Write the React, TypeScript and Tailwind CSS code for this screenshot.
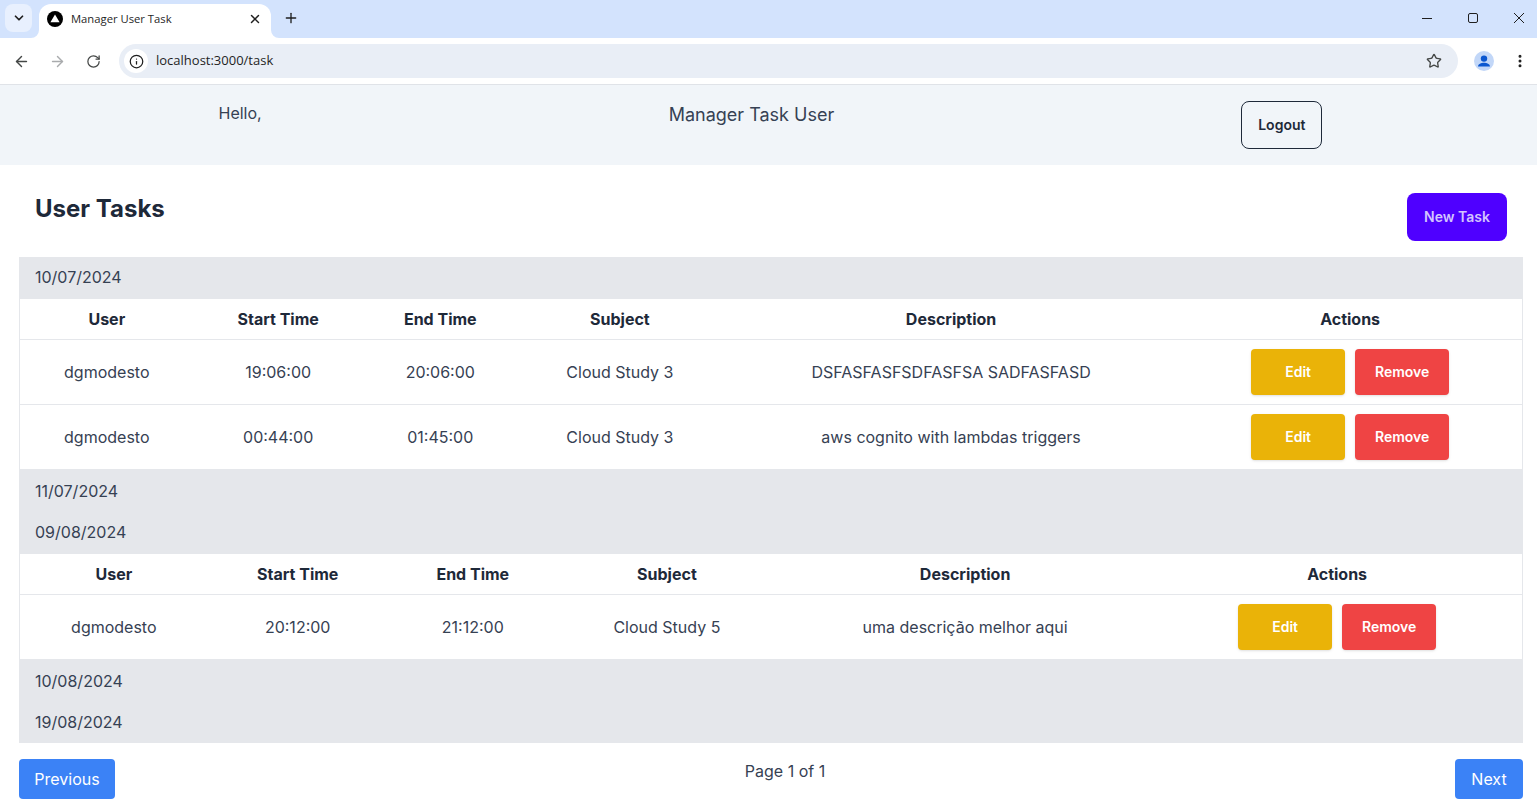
import { ArrowLeft, ArrowRight, ChevronDown, EllipsisVertical, Info, Plus, RotateCw, Star, X } from "lucide-react";

type Task = {
	user: string;
	start: string;
	end: string;
	subject: string;
	description: string;
};

type Group = {
	date: string;
	rowClass: string;
	widths: string[];
	tasks: Task[];
};

const firstWidths = ["w-[174px]", "w-[169px]", "w-[155px]", "w-[204px]", "w-[458px]", "w-[342px]"];
const thirdWidths = ["w-[188px]", "w-[180px]", "w-[170px]", "w-[218px]", "w-[378px]", "w-[368px]"];

const groups: Group[] = [
	{
		date: "10/07/2024",
		rowClass: "h-[42px] pt-2",
		widths: firstWidths,
		tasks: [
			{
				user: "dgmodesto",
				start: "19:06:00",
				end: "20:06:00",
				subject: "Cloud Study 3",
				description: "DSFASFASFSDFASFSA SADFASFASD",
			},
			{
				user: "dgmodesto",
				start: "00:44:00",
				end: "01:45:00",
				subject: "Cloud Study 3",
				description: "aws cognito with lambdas triggers",
			},
		],
	},
	{ date: "11/07/2024", rowClass: "h-[42px] pt-[9px]", widths: [], tasks: [] },
	{
		date: "09/08/2024",
		rowClass: "h-[42.5px] pt-2",
		widths: thirdWidths,
		tasks: [
			{
				user: "dgmodesto",
				start: "20:12:00",
				end: "21:12:00",
				subject: "Cloud Study 5",
				description: "uma descrição melhor aqui",
			},
		],
	},
	{ date: "10/08/2024", rowClass: "h-[42.5px] pt-[9px]", widths: [], tasks: [] },
	{ date: "19/08/2024", rowClass: "h-[41px] pt-2", widths: [], tasks: [] },
];

const headers = ["User", "Start Time", "End Time", "Subject", "Description", "Actions"];

function BrowserChrome() {
	return (
		<div className="font-['Open_Sans',sans-serif]">
			<div className="flex h-[38px] items-end bg-[#d3e3fd] text-[#1f1f1f]">
				<div className="mb-[6px] ml-[5px] flex h-[28px] w-[27px] items-center justify-center rounded-lg bg-[#e8f0fe]">
					<ChevronDown size={14} strokeWidth={3} />
				</div>
				<div className="relative ml-[7px] flex h-[34px] w-[232px] items-center rounded-t-xl bg-white pb-[5px] pl-[8px] pr-[9px]">
					<svg className="absolute -left-2 bottom-0" width="8" height="8" viewBox="0 0 8 8">
						<path d="M8 0v8H0a8 8 0 0 0 8-8z" fill="#fff" />
					</svg>
					<svg className="absolute -right-2 bottom-0" width="8" height="8" viewBox="0 0 8 8">
						<path d="M0 0v8h8a8 8 0 0 1-8-8z" fill="#fff" />
					</svg>
					<svg width="16" height="16" viewBox="0 0 16 16" className="shrink-0">
						<circle cx="8" cy="8" r="8" fill="#000" />
						<path d="M8 3.6 12.6 11.2H3.4z" fill="#fff" />
					</svg>
					<span className="ml-[8px] text-[11.25px] leading-none whitespace-nowrap">Manager User Task</span>
					<X size={14} strokeWidth={2.5} className="ml-auto" />
				</div>
				<Plus size={16} strokeWidth={2} className="mb-[12px] ml-3" />
				<div className="mb-[14px] ml-auto mr-3 flex items-center gap-[34px]">
					<svg width="12" height="12" viewBox="0 0 12 12" fill="none" stroke="#1f1f1f" strokeWidth="1">
						<path d="M1 6.5h10" />
					</svg>
					<svg width="12" height="12" viewBox="0 0 12 12" fill="none" stroke="#1f1f1f" strokeWidth="1">
						<rect x="1.5" y="1.5" width="9" height="9" rx="1.5" />
					</svg>
					<svg width="12" height="12" viewBox="0 0 12 12" fill="none" stroke="#1f1f1f" strokeWidth="1">
						<path d="M1 1l10 10M11 1 1 11" />
					</svg>
				</div>
			</div>
			<div className="flex h-[47px] items-center border-b border-[#e0e3e8] bg-white text-[#444746]">
				<ArrowLeft size={17} strokeWidth={2} className="ml-[13px]" />
				<ArrowRight size={17} strokeWidth={2} className="ml-[19px] text-[#a9abad]" />
				<RotateCw size={15} strokeWidth={2} className="ml-[20px]" />
				<div className="ml-[18px] flex h-[34px] flex-1 items-center rounded-full bg-[#e9eef6] pl-[5px] pr-[16px]">
					<div className="flex h-6 w-6 items-center justify-center rounded-full bg-white">
						<Info size={15} strokeWidth={2} className="text-[#1f1f1f]" />
					</div>
					<span className="ml-[8px] text-[13px] text-[#1f1f1f]">localhost:3000/task</span>
					<Star size={16} strokeWidth={2} className="ml-auto" />
				</div>
				<div className="ml-4 flex h-5 w-5 items-center justify-center overflow-hidden rounded-full bg-[#c2d7f8]">
					<svg width="20" height="20" viewBox="0 0 20 20">
						<circle cx="10" cy="7.6" r="3.2" fill="#0b57d0" />
						<path d="M4 15.6c0-2.6 3.4-3.8 6-3.8s6 1.2 6 3.8z" fill="#0b57d0" />
					</svg>
				</div>
				<EllipsisVertical size={16} strokeWidth={2.5} className="ml-[18px] mr-[9px] text-[#1f1f1f]" />
			</div>
		</div>
	);
}

function TaskTable({ widths, tasks }: { widths: string[]; tasks: Task[] }) {
	return (
		<table className="w-full table-fixed border-x border-gray-200 bg-white">
			<colgroup>
				{widths.map((w, i) => (
					<col key={i} className={w} />
				))}
			</colgroup>
			<thead>
				<tr className="border-b border-gray-200">
					{headers.map((h) => (
						<th key={h} className="h-[40px] font-bold text-gray-800 last:pr-[2px]">
							{h}
						</th>
					))}
				</tr>
			</thead>
			<tbody>
				{tasks.map((t, i) => (
					<tr key={i} className="border-b border-gray-200">
						<td className="h-[65px] text-center">{t.user}</td>
						<td className="text-center">{t.start}</td>
						<td className="text-center">{t.end}</td>
						<td className="text-center">{t.subject}</td>
						<td className="text-center">{t.description}</td>
						<td className="pr-[2px]">
							<div className="flex justify-center gap-[10px]">
								<button className="h-[46px] w-[94px] rounded-sm bg-[#eab308] text-sm font-semibold text-white shadow-sm">
									Edit
								</button>
								<button className="h-[46px] w-[94px] rounded-sm bg-[#ef4444] text-sm font-semibold text-white shadow-sm">
									Remove
								</button>
							</div>
						</td>
					</tr>
				))}
			</tbody>
		</table>
	);
}

export default function App() {
	return (
		<div className="h-[809px] overflow-hidden bg-white font-['Inter',sans-serif] text-gray-700">
			<BrowserChrome />

			<header className="flex h-20 items-start justify-around bg-[#f1f5f9] pb-4 pl-[15px] pr-[11px] pt-4">
				<span className="leading-6">Hello,</span>
				<span className="text-lg">Manager Task User</span>
				<button className="h-12 rounded-lg border border-gray-800 px-4 text-sm font-semibold text-gray-800">
					Logout
				</button>
			</header>

			<main className="pl-[19px] pr-[14px]">
				<div className="flex items-start justify-between pb-4 pl-4 pr-4 pt-7">
					<h1 className="text-2xl font-bold text-gray-800">User Tasks</h1>
					<button className="h-12 rounded-lg bg-[#4f00ff] px-[17px] text-sm font-semibold text-[#d3c4ff]">
						New Task
					</button>
				</div>

				<div>
					{groups.map((g) => (
						<div key={g.date}>
							<div className={`bg-gray-200 px-4 ${g.rowClass}`}>{g.date}</div>
							{g.tasks.length > 0 && <TaskTable widths={g.widths} tasks={g.tasks} />}
						</div>
					))}
				</div>

				<div className="mt-4 flex items-start justify-between">
					<button className="h-10 w-[96px] rounded-sm bg-[#3b82f6] text-white">Previous</button>
					<span>Page 1 of 1</span>
					<button className="h-10 w-[68px] rounded-sm bg-[#3b82f6] text-white">Next</button>
				</div>
			</main>
		</div>
	);
}
